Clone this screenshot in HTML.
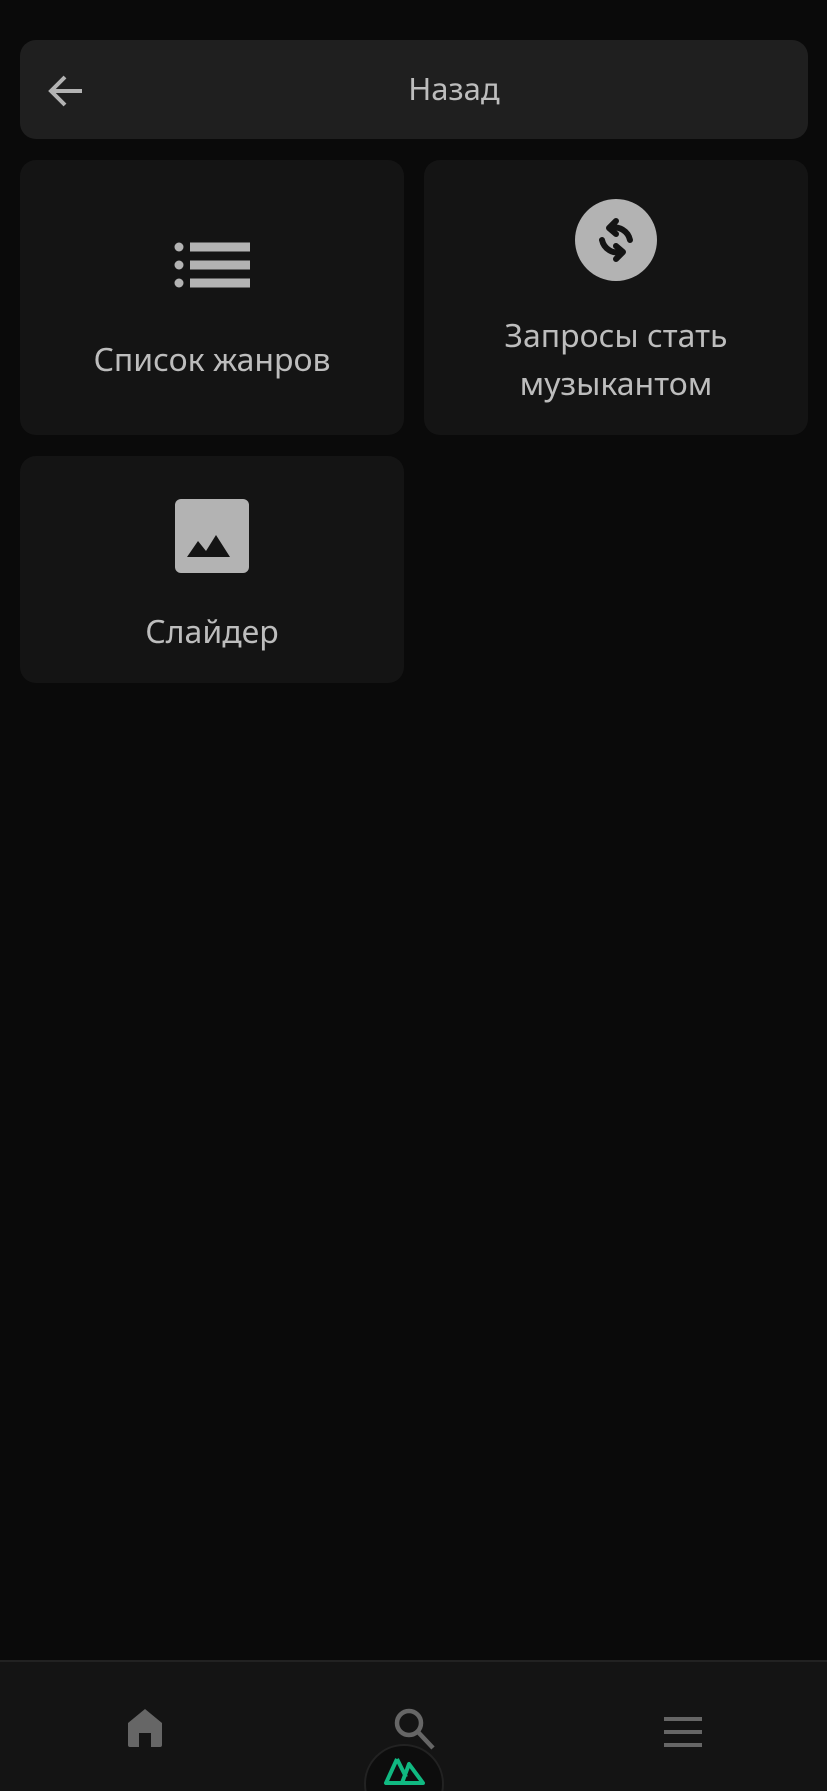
<!DOCTYPE html>
<html><head><meta charset="utf-8"><style>
*{box-sizing:border-box;margin:0;padding:0}
html,body{width:827px;height:1791px;overflow:hidden}
body{background:#0a0a0a;font-family:"Noto Sans","Liberation Sans","DejaVu Sans",sans-serif;color:#bdbdbd;position:relative}
.hdr{position:absolute;left:20px;top:40px;width:788px;height:99px;background:#1f1f1f;border-radius:16px}
.hdr .t{position:absolute;left:80px;right:0;top:0;line-height:99px;text-align:center;font-size:31px}
.card{position:absolute;background:#141414;border-radius:16px}
.lbl{position:absolute;left:0;right:0;text-align:center;font-size:32px;line-height:48px}
.nav{position:absolute;left:0;top:1660px;width:827px;height:131px;background:#141414;border-top:2px solid #222;overflow:hidden}
</style></head><body>
<div class="hdr">
<svg style="position:absolute;left:26px;top:31px" width="40" height="40" viewBox="0 0 40 40"><path d="M36 20H6M19 6L5 20l14 14" stroke="#b3b3b3" stroke-width="4" fill="none"/></svg>
<div class="t">Назад</div></div>

<div class="card" style="left:20px;top:160px;width:384px;height:275px">
<svg style="position:absolute;left:154px;top:82px" width="76" height="46" viewBox="0 0 76 46"><circle cx="5" cy="5" r="4.5" fill="#b3b3b3"/><circle cx="5" cy="23" r="4.5" fill="#b3b3b3"/><circle cx="5" cy="41" r="4.5" fill="#b3b3b3"/><rect x="16" y="0.5" width="60" height="9" fill="#b3b3b3"/><rect x="16" y="18.5" width="60" height="9" fill="#b3b3b3"/><rect x="16" y="36.5" width="60" height="9" fill="#b3b3b3"/></svg>
<div class="lbl" style="top:176px">Список жанров</div></div>

<div class="card" style="left:424px;top:160px;width:384px;height:275px">
<svg style="position:absolute;left:150px;top:38px" width="84" height="84" viewBox="0 0 84 84"><circle cx="42" cy="42" r="41" fill="#b3b3b3"/><g stroke="#141414" stroke-width="6" fill="none" stroke-linecap="round" stroke-linejoin="round"><path d="M36 30a16 16 0 0 1 20 12"/><path d="M42 23l-7 7 7 6"/><path d="M48 54a16 16 0 0 1 -20 -12"/><path d="M42 61l7 -7 -7 -6"/></g></svg>
<div class="lbl" style="top:152px">Запросы стать<br>музыкантом</div></div>

<div class="card" style="left:20px;top:456px;width:384px;height:227px">
<svg style="position:absolute;left:155px;top:43px" width="74" height="74" viewBox="0 0 74 74"><rect width="74" height="74" rx="6" fill="#b3b3b3"/><path d="M12 58l11-16 8 10 10-16 14 22z" fill="#141414"/></svg>
<div class="lbl" style="top:152px">Слайдер</div></div>

<div class="nav">
<svg style="position:absolute;left:128px;top:47px" width="34" height="38" viewBox="0 0 34 38"><path d="M17 0L34 14v22a2 2 0 0 1-2 2H23V24H11v14H2a2 2 0 0 1-2-2V14z" fill="#666"/></svg>
<svg style="position:absolute;left:394px;top:46px" width="42" height="42" viewBox="0 0 42 42"><circle cx="15" cy="15" r="12" stroke="#666" stroke-width="4.5" fill="none"/><path d="M24 24l15 16" stroke="#666" stroke-width="4.5"/></svg>
<svg style="position:absolute;left:664px;top:55px" width="38" height="30" viewBox="0 0 38 30"><rect y="0" width="38" height="4" fill="#666"/><rect y="13" width="38" height="4" fill="#666"/><rect y="26" width="38" height="4" fill="#666"/></svg>
<div style="position:absolute;left:364px;top:82px;width:80px;height:80px;border-radius:50%;background:#0d0d0d;border:2px solid #222"></div>
<svg style="position:absolute;left:383px;top:94px" width="42" height="30" viewBox="0 0 42 30"><path d="M14 3L3 27h16" stroke="#10b981" stroke-width="4" fill="none" stroke-linejoin="round"/><path d="M14 3l9 18M26 8l-7 19h21z" stroke="#10b981" stroke-width="4" fill="none" stroke-linejoin="round"/></svg>
</div>
</body></html>
